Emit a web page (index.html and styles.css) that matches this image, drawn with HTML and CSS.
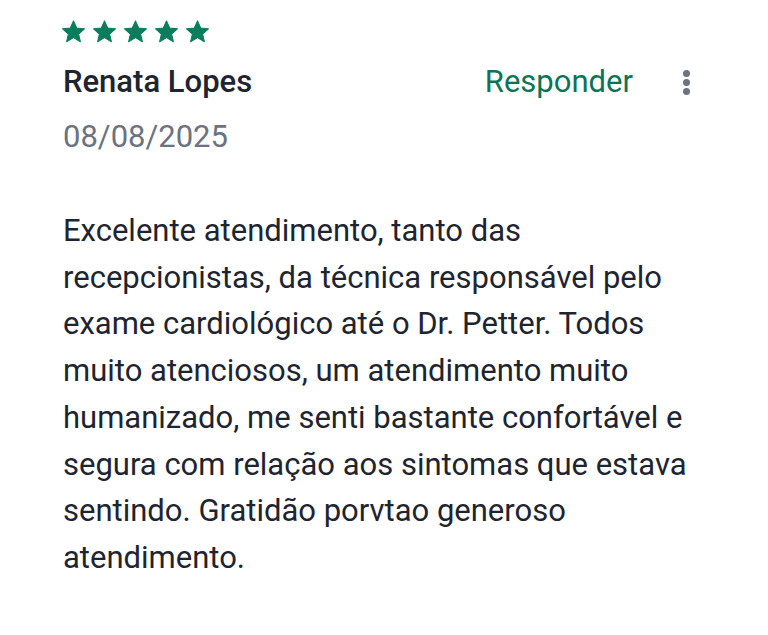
FILE: index.html
```html
<!DOCTYPE html>
<html lang="pt-BR">
<head>
    <meta charset="UTF-8">
    <title>Avaliação</title>
    <link rel="stylesheet" href="styles.css">
</head>
<body>
<div class="review">
    <div class="stars">
        <svg class="star" viewBox="0 0 24 24"><path d="M12 1.8l3.1 6.9 7.4.7-5.6 5 1.7 7.4L12 17.9l-6.6 3.9 1.7-7.4-5.6-5 7.4-.7z"/></svg>
        <svg class="star" viewBox="0 0 24 24"><path d="M12 1.8l3.1 6.9 7.4.7-5.6 5 1.7 7.4L12 17.9l-6.6 3.9 1.7-7.4-5.6-5 7.4-.7z"/></svg>
        <svg class="star" viewBox="0 0 24 24"><path d="M12 1.8l3.1 6.9 7.4.7-5.6 5 1.7 7.4L12 17.9l-6.6 3.9 1.7-7.4-5.6-5 7.4-.7z"/></svg>
        <svg class="star" viewBox="0 0 24 24"><path d="M12 1.8l3.1 6.9 7.4.7-5.6 5 1.7 7.4L12 17.9l-6.6 3.9 1.7-7.4-5.6-5 7.4-.7z"/></svg>
        <svg class="star" viewBox="0 0 24 24"><path d="M12 1.8l3.1 6.9 7.4.7-5.6 5 1.7 7.4L12 17.9l-6.6 3.9 1.7-7.4-5.6-5 7.4-.7z"/></svg>
    </div>
    <div class="head">
        <p class="name">Renata Lopes</p>
        <button class="reply">Responder</button>
        <button class="more"><span></span><span></span><span></span></button>
    </div>
    <p class="date">08/08/2025</p>
    <p class="text">Excelente atendimento, tanto das recepcionistas, da técnica responsável pelo exame cardiológico até o Dr. Petter. Todos muito atenciosos, um atendimento muito humanizado, me senti bastante confortável e segura com relação aos sintomas que estava sentindo. Gratidão porvtao generoso atendimento.</p>
</div>
</body>
</html>
```

FILE: styles.css
```css
body {
    margin: 0;
    background: #fff;
    font-family: Roboto, "Noto Sans", sans-serif;
}

.review {
    padding: 19px 0 0 63px;
    width: 632px;
}

.stars {
    display: flex;
    gap: 6px;
    margin-left: -2px;
}

.star {
    width: 25px;
    height: 25px;
    fill: #0a7d5e;
    stroke: #0a7d5e;
    stroke-width: 1;
    stroke-linejoin: round;
}

.head {
    display: flex;
    align-items: center;
    margin-top: 20px;
}

.name {
    margin: 0;
    flex: 1;
    font-size: 31px;
    line-height: 36px;
    font-weight: 500;
    color: #1e2430;
}

.reply {
    border: none;
    background: none;
    padding: 0;
    font-family: inherit;
    font-size: 31px;
    line-height: 36px;
    color: #0b7456;
}

.more {
    border: none;
    background: none;
    padding: 0;
    margin: 0 5px 0 50px;
    display: flex;
    flex-direction: column;
    gap: 2px;
}

.more span {
    width: 7px;
    height: 7px;
    border-radius: 50%;
    background: #6b7280;
}

.date {
    margin: 19px 0 0;
    font-size: 31px;
    line-height: 36px;
    color: #6b7280;
}

.text {
    margin: 53px 0 0;
    font-size: 31px;
    line-height: 46.7px;
    color: #1e2430;
}
```
